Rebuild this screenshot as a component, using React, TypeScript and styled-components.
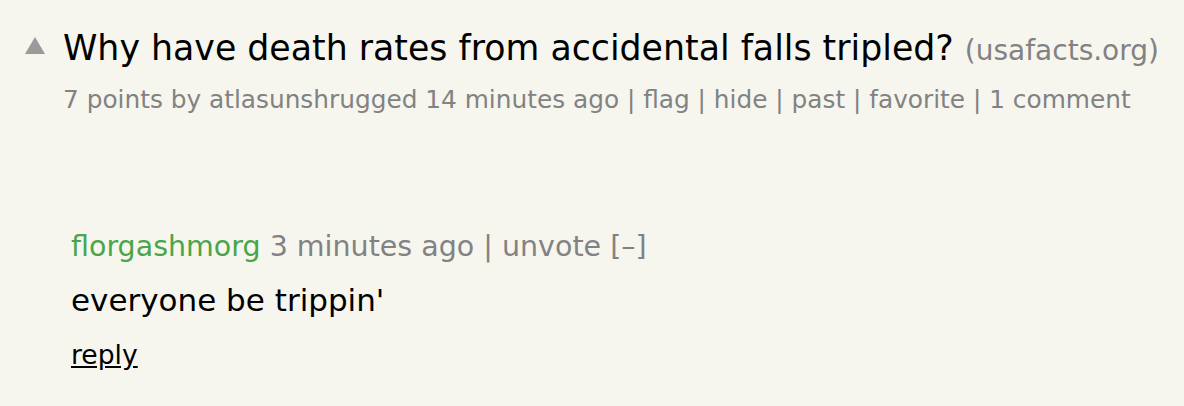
import React from "react";
import styled, { createGlobalStyle } from "styled-components";

const Global = createGlobalStyle`
  html, body { margin: 0; padding: 0; background: #f6f6ef; }
  body { font-family: "DejaVu Sans", Verdana, sans-serif; }
`;

const Page = styled.div`
  background: #f6f6ef;
  width: 1184px;
  height: 406px;
  box-sizing: border-box;
  padding: 28px 0 0 25px;
`;

const Story = styled.div`
  display: grid;
  grid-template-columns: 38px auto;
  row-gap: 14px;
`;

const Vote = styled.div`
  padding-top: 9px;
`;

const Arrow = styled.div`
  width: 0;
  height: 0;
  border-left: 10px solid transparent;
  border-right: 10px solid transparent;
  border-bottom: 17px solid #9a9a9a;
`;

const Title = styled.div`
  font-size: 34.75px;
  color: #000;
  line-height: 40px;
  white-space: nowrap;
`;

const Site = styled.span`
  font-size: 28px;
  color: #828282;
`;

const Sub = styled.div`
  grid-column: 2;
  font-size: 24.8px;
  color: #828282;
  line-height: 30px;
  white-space: nowrap;
`;

const Comment = styled.div`
  margin-top: 115px;
  margin-left: 46px;
  display: flex;
  flex-direction: column;
`;

const Head = styled.div`
  font-size: 28.5px;
  color: #828282;
  line-height: 34px;
`;

const User = styled.span`
  color: #4aa54a;
`;

const Body = styled.div`
  font-size: 31px;
  color: #000;
  margin-top: 18px;
  line-height: 36px;
`;

const Reply = styled.a`
  font-size: 26.6px;
  color: #000;
  text-decoration: underline;
  line-height: 32px;
`;

const ReplyRow = styled.div`
  margin-top: 21px;
  line-height: 32px;
`;

export default function App() {
  return (
    <>
      <Global />
      <Page>
        <Story>
          <Vote>
            <Arrow />
          </Vote>
          <Title>
            Why have death rates from accidental falls tripled? <Site>(usafacts.org)</Site>
          </Title>
          <Sub>
            7 points by atlasunshrugged 14 minutes ago | flag | hide | past | favorite | 1 comment
          </Sub>
        </Story>
        <Comment>
          <Head>
            <User>florgashmorg</User> 3 minutes ago | unvote [–]
          </Head>
          <Body>everyone be trippin'</Body>
          <ReplyRow>
            <Reply>reply</Reply>
          </ReplyRow>
        </Comment>
      </Page>
    </>
  );
}
